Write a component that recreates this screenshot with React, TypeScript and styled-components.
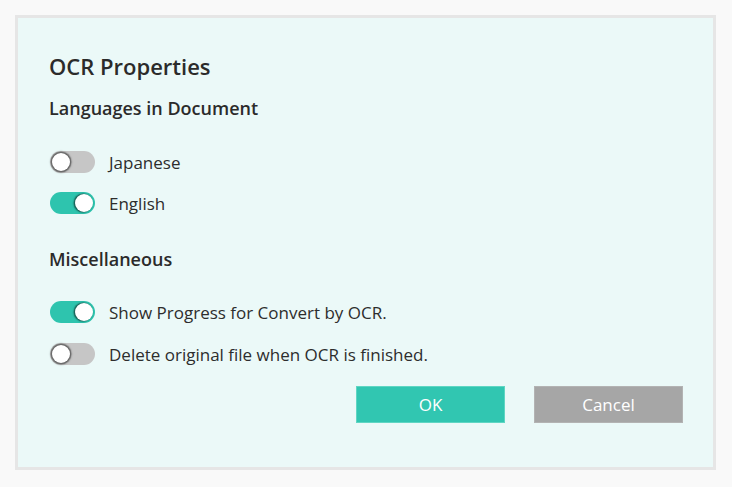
import React, { useState } from "react";
import styled, { createGlobalStyle } from "styled-components";

const Global = createGlobalStyle`
  html, body { margin: 0; padding: 0; background: #f9f9f9; }
  body { font-family: "Open Sans", "Noto Sans", sans-serif; color: #2d2d2d; }
`;

const Page = styled.div`
  width: 732px;
  height: 487px;
  box-sizing: border-box;
  padding: 15px 16px 17px 15px;
  display: flex;
`;

const Dialog = styled.div`
  flex: 1;
  box-sizing: border-box;
  border: 3px solid #e6e6e6;
  background: #ebf9f8;
  padding: 33px 30px 0 31px;
  display: flex;
  flex-direction: column;
`;

const Title = styled.h1`
  margin: 0;
  font-size: 22px;
  font-weight: 600;
  line-height: 30px;
  color: #2b2b2b;
`;

const SectionTitle = styled.h2<{ $top: number }>`
  margin: ${(p) => p.$top}px 0 0;
  font-size: 18px;
  font-weight: 600;
  line-height: 24px;
  color: #2b2b2b;
`;

const List = styled.div<{ $top: number; $gap: number }>`
  margin-top: ${(p) => p.$top}px;
  display: flex;
  flex-direction: column;
  gap: ${(p) => p.$gap}px;
`;

const Row = styled.label`
  display: flex;
  align-items: center;
  gap: 14px;
  height: 22px;
  padding-left: 1px;
  cursor: pointer;
  font-size: 17px;
  color: #2d2d2d;
`;

const Track = styled.span<{ $on: boolean }>`
  position: relative;
  width: 45px;
  height: 22px;
  border-radius: 11px;
  background: ${(p) => (p.$on ? "#2ec4ae" : "#c6c6c6")};
  flex: none;
`;

const Knob = styled.span<{ $on: boolean }>`
  position: absolute;
  top: 2px;
  left: ${(p) => (p.$on ? "25px" : "2px")};
  width: 18px;
  height: 18px;
  border-radius: 50%;
  background: #fff;
  box-shadow: ${(p) =>
    p.$on ? "-1px 0 1.5px 0.5px rgba(0,0,0,0.55)" : "0 0 1.5px 1.5px rgba(60,60,60,0.75)"};
`;

const Buttons = styled.div`
  margin-top: 21px;
  display: flex;
  justify-content: flex-end;
  gap: 29px;
`;

const Button = styled.button<{ $primary?: boolean }>`
  width: 149px;
  height: 37px;
  border: 1px solid ${(p) => (p.$primary ? "#5fd6c3" : "#b3b3b3")};
  background: ${(p) => (p.$primary ? "#31c6b1" : "#a6a6a6")};
  color: #fff;
  font-family: "Open Sans", "Noto Sans", sans-serif;
  font-size: 17px;
  cursor: pointer;
  padding: 0;
`;

function Toggle({ label, initial }: { label: string; initial: boolean }) {
  const [on, setOn] = useState(initial);
  return (
    <Row onClick={() => setOn(!on)}>
      <Track $on={on}>
        <Knob $on={on} />
      </Track>
      {label}
    </Row>
  );
}

export default function App() {
  return (
    <>
      <Global />
      <Page>
        <Dialog>
          <Title>OCR Properties</Title>
          <SectionTitle $top={15}>Languages in Document</SectionTitle>
          <List $top={31} $gap={19}>
            <Toggle label="Japanese" initial={false} />
            <Toggle label="English" initial={true} />
          </List>
          <SectionTitle $top={33}>Miscellaneous</SectionTitle>
          <List $top={30} $gap={20}>
            <Toggle label="Show Progress for Convert by OCR." initial={true} />
            <Toggle label="Delete original file when OCR is finished." initial={false} />
          </List>
          <Buttons>
            <Button $primary>OK</Button>
            <Button>Cancel</Button>
          </Buttons>
        </Dialog>
      </Page>
    </>
  );
}
